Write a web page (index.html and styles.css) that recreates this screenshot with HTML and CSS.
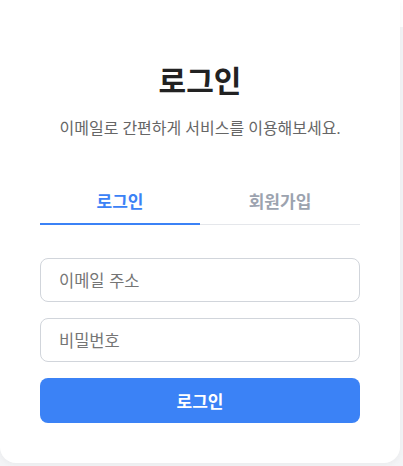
FILE: index.html
```html
<!DOCTYPE html>
<html lang="ko">
<head>
    <meta charset="UTF-8">
    <meta name="viewport" content="width=device-width, initial-scale=1.0">
    <title>로그인</title>
    <link rel="stylesheet" href="styles.css">
</head>
<body>
    <div class="page">
        <div class="auth-card">
            <h1 class="auth-title">로그인</h1>
            <p class="auth-subtitle">이메일로 간편하게 서비스를 이용해보세요.</p>

            <div class="tabs">
                <button class="tab active">로그인</button>
                <button class="tab">회원가입</button>
            </div>

            <form class="auth-form">
                <input type="email" class="auth-input" placeholder="이메일 주소">
                <input type="password" class="auth-input" placeholder="비밀번호">
                <button type="submit" class="submit-button">로그인</button>
            </form>
        </div>
    </div>
</body>
</html>
```

FILE: styles.css
```css
* {
    margin: 0;
    padding: 0;
    box-sizing: border-box;
}

body {
    background-color: #f3f4f6;
    font-family: "Liberation Serif", "Noto Sans CJK KR", serif;
}

.page {
    width: 403px;
    height: 466px;
    overflow: hidden;
    background: linear-gradient(to bottom, #ffffff 0, #ffffff 27px, #f3f4f6 27px);
}

.auth-card {
    width: 400px;
    background-color: #ffffff;
    padding: 64px 40px 40px;
    border-radius: 0 0 16px 16px;
    box-shadow: 0 2px 6px rgba(0,0,0,0.04);
}

.auth-title {
    font-size: 30px;
    line-height: 36px;
    font-weight: bold;
    text-align: center;
    color: #222222;
    margin-bottom: 18px;
}

.auth-subtitle {
    font-size: 16px;
    line-height: 22px;
    text-align: center;
    color: #666666;
    margin-bottom: 38px;
}

.tabs {
    display: flex;
    border-bottom: 1px solid #e5e7eb;
}

.tab {
    flex: 1;
    background: none;
    border: none;
    border-bottom: 2px solid transparent;
    margin-bottom: -1px;
    padding: 11px 0 10px;
    font-family: "Noto Sans CJK KR", sans-serif;
    font-size: 17px;
    line-height: 24px;
    font-weight: bold;
    color: #9ca3af;
    cursor: pointer;
}

.tab.active {
    color: #3b82f6;
    border-bottom-color: #3b82f6;
}

.auth-form {
    display: flex;
    flex-direction: column;
    gap: 16px;
    margin-top: 33px;
}

.auth-input {
    height: 44px;
    padding: 0 18px;
    border: 1px solid #d1d5db;
    border-radius: 8px;
    font-family: "Noto Sans CJK KR", sans-serif;
    font-size: 16.5px;
    color: #333333;
    outline: none;
}

.auth-input::placeholder {
    color: #757575;
}

.submit-button {
    height: 45px;
    border: none;
    border-radius: 8px;
    background-color: #3b82f6;
    color: #ffffff;
    font-family: "Noto Sans CJK KR", sans-serif;
    font-size: 17px;
    font-weight: bold;
    cursor: pointer;
}
```
